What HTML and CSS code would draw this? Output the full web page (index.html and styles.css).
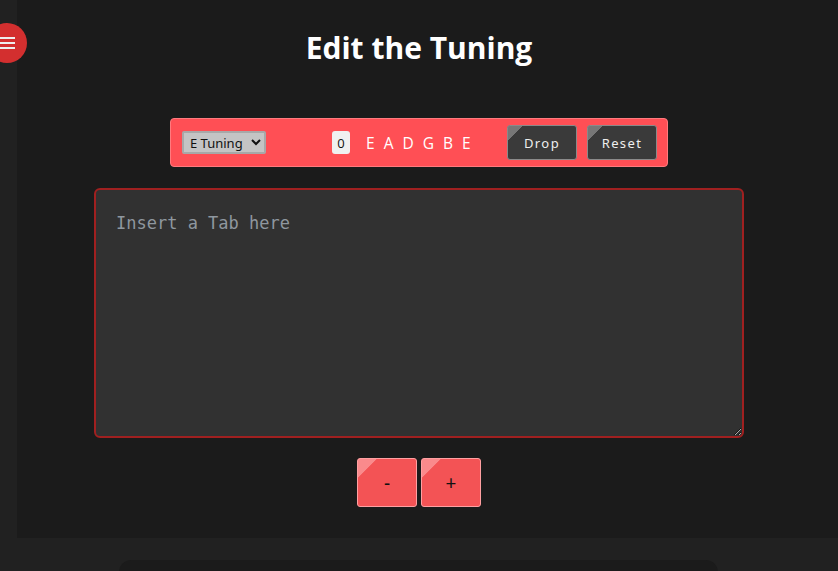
FILE: index.html
```html
<!DOCTYPE html>
<html>
<head>
<meta charset="utf-8">
<link rel="stylesheet" href="styles.css">
</head>
<body>
<button class="menu" aria-label="menu">
  <span></span><span></span><span></span>
</button>
<main class="panel">
  <h1 class="title">Edit the Tuning</h1>
  <div class="toolbar">
    <select class="tuning-select">
      <option>E Tuning</option>
    </select>
    <span class="offset">0</span>
    <span class="notes">E A D G B E</span>
    <button class="dark-btn drop">Drop</button>
    <button class="dark-btn">Reset</button>
  </div>
  <textarea class="tab-input" placeholder="Insert a Tab here"></textarea>
  <div class="stepper">
    <button class="red-btn">-</button>
    <button class="red-btn">+</button>
  </div>
</main>
<section class="lower"></section>
</body>
</html>
```
FILE: styles.css
```css
* { box-sizing: border-box; }
html, body { margin: 0; padding: 0; }
body {
  background: #212121;
  font-family: "Open Sans", "Noto Sans", sans-serif;
  width: 838px;
  height: 571px;
  overflow: hidden;
  position: relative;
}
.menu {
  position: absolute;
  left: -13px;
  top: 23px;
  width: 40px;
  height: 40px;
  border-radius: 50%;
  background: #d32f2f;
  border: none;
  padding: 0 0 0 13px;
  display: flex;
  flex-direction: column;
  justify-content: center;
  align-items: flex-start;
  gap: 3px;
  z-index: 2;
}
.menu span {
  display: block;
  width: 15px;
  height: 2px;
  background: #eee;
}
.panel {
  margin-left: 17px;
  height: 538px;
  background: #1b1b1b;
  display: flex;
  flex-direction: column;
  align-items: center;
  padding-top: 27px;
  padding-right: 17px;
}
.title {
  margin: 0;
  color: #fff;
  font-size: 30px;
  font-weight: 700;
  line-height: 42px;
}
.toolbar {
  margin-top: 49px;
  width: 498px;
  height: 49px;
  background: #ff4f55;
  border: 1px solid #ff7a7e;
  border-radius: 4px;
  display: flex;
  align-items: center;
  padding: 0 10px 0 11px;
}
.tuning-select {
  width: 84px;
  height: 23px;
  font-family: "Noto Sans", sans-serif;
  font-size: 13px;
  background: #c4c4c4;
  border: 2px solid #a8a8a8;
  border-radius: 2px;
  color: #111;
  padding: 0 2px;
}
.offset {
  margin-left: 66px;
  width: 18px;
  height: 23px;
  background: #f0f0f0;
  border-radius: 3px;
  font-size: 13px;
  color: #111;
  display: flex;
  align-items: center;
  justify-content: center;
}
.notes {
  margin-left: 16px;
  color: #fff;
  font-size: 15.5px;
  letter-spacing: 2.5px;
  white-space: nowrap;
}
.dark-btn {
  width: 70px;
  height: 35px;
  background: #3a3a3a linear-gradient(135deg, #777 0, #777 10px, transparent 10.5px);
  border: 1px solid #8a8a8a;
  border-radius: 3px;
  color: #eee;
  font-family: "Noto Sans", sans-serif;
  font-size: 13px;
  letter-spacing: 1.4px;
}
.drop { margin-left: auto; margin-right: 10px; }
.tab-input {
  margin-top: 21px;
  width: 650px;
  height: 250px;
  background: #313131;
  border: 2px solid #a02020;
  border-radius: 6px;
  padding: 23px 20px 21px;
  font-family: "DejaVu Sans Mono", monospace;
  font-size: 17px;
  color: #ddd;
  resize: vertical;
  outline: none;
}
.tab-input::placeholder { color: #8f979f; }
.stepper {
  margin-top: 20px;
  display: flex;
  gap: 4px;
}
.red-btn {
  width: 60px;
  height: 49px;
  background: #f35355 linear-gradient(135deg, #fa8a8c 0, #fa8a8c 13px, transparent 13.5px);
  border: 1px solid #ffa0a2;
  border-radius: 3px;
  color: #111;
  font-family: "Noto Sans", sans-serif;
  font-size: 19px;
}
.lower {
  position: absolute;
  left: 119px;
  top: 560px;
  width: 599px;
  height: 40px;
  background: #1b1b1b;
  border-radius: 12px;
}
```
